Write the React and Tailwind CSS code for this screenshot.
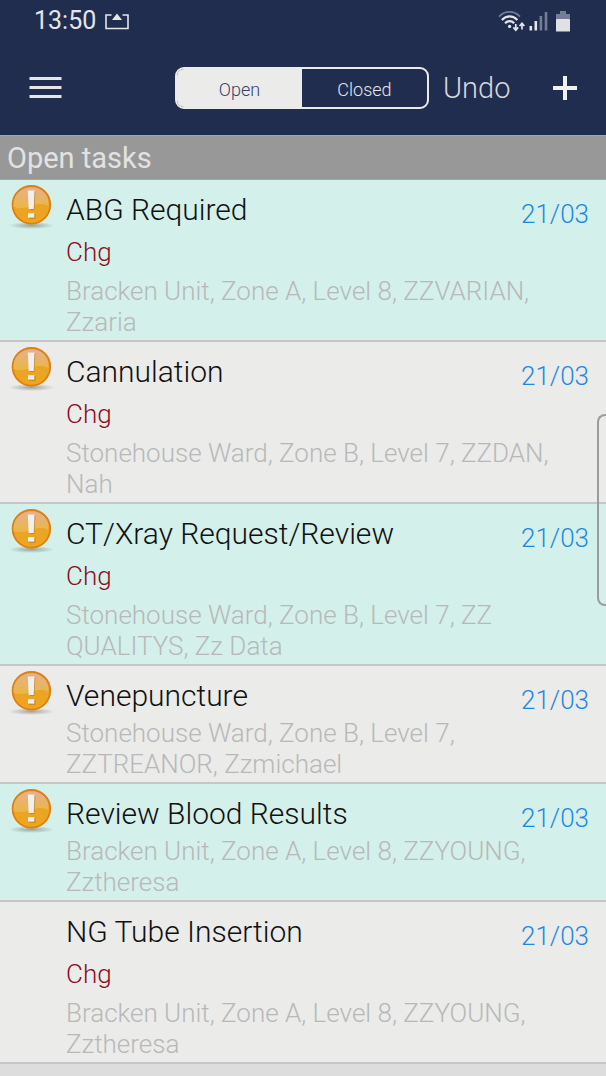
import { useState } from 'react';

const TASKS = [
  {
    id: 1,
    title: 'ABG Required',
    status: 'Chg',
    location: 'Bracken Unit, Zone A, Level 8, ZZVARIAN, Zzaria',
    date: '21/03',
    urgent: true,
  },
  {
    id: 2,
    title: 'Cannulation',
    status: 'Chg',
    location: 'Stonehouse Ward, Zone B, Level 7, ZZDAN, Nah',
    date: '21/03',
    urgent: true,
  },
  {
    id: 3,
    title: 'CT/Xray Request/Review',
    status: 'Chg',
    location: 'Stonehouse Ward, Zone B, Level 7, ZZ QUALITYS, Zz Data',
    date: '21/03',
    urgent: true,
  },
  {
    id: 4,
    title: 'Venepuncture',
    location: 'Stonehouse Ward, Zone B, Level 7, ZZTREANOR, Zzmichael',
    date: '21/03',
    urgent: true,
  },
  {
    id: 5,
    title: 'Review Blood Results',
    location: 'Bracken Unit, Zone A, Level 8, ZZYOUNG, Zztheresa',
    date: '21/03',
    urgent: true,
  },
  {
    id: 6,
    title: 'NG Tube Insertion',
    status: 'Chg',
    location: 'Bracken Unit, Zone A, Level 8, ZZYOUNG, Zztheresa',
    date: '21/03',
    urgent: false,
  },
];

const ShareIcon = () => (
  <svg width="24" height="17" viewBox="0 0 24 17" aria-hidden="true">
    <path d="M6.5 2H1v13.5h22V2h-5.5" fill="none" stroke="#e4e6ea" strokeWidth="1.6" />
    <path d="M12 0.5L17 7H7z" fill="#e4e6ea" />
  </svg>
);

const WifiIcon = () => (
  <svg width="27" height="21" viewBox="0 0 27 21" fill="none" aria-hidden="true">
    <path d="M1 5.6C7 -0.6 16 -0.6 22 5.6" stroke="#737d95" strokeWidth="1.8" />
    <path d="M3.8 9C8.6 4.2 14.8 4.2 19.4 9" stroke="#e4e6ea" strokeWidth="2.1" />
    <path d="M7 12.2C9.8 9.4 13.6 9.4 16.2 12.2" stroke="#e4e6ea" strokeWidth="2.1" />
    <circle cx="11.6" cy="15.4" r="1.6" fill="#e4e6ea" />
    <path d="M17.8 13v6M15.4 16.4l2.4 2.8 2.4-2.8M24 18.5v-6M21.6 15l2.4-2.8 2.4 2.8" stroke="#e4e6ea" strokeWidth="1.7" />
  </svg>
);

const SignalIcon = () => (
  <svg width="19" height="20" viewBox="0 0 19 20" aria-hidden="true">
    <rect x="0.5" y="15" width="2.6" height="4.5" fill="#e4e6ea" />
    <rect x="5.5" y="10" width="2.6" height="9.5" fill="#e4e6ea" />
    <rect x="10.6" y="5" width="2.6" height="14.5" fill="#737d95" />
    <rect x="15.7" y="1" width="2.6" height="18.5" fill="#737d95" />
  </svg>
);

const BatteryIcon = () => (
  <svg width="14" height="21" viewBox="0 0 14 21" aria-hidden="true">
    <path d="M4 0h6v3h4v5H0V3h4z" fill="#737d95" />
    <rect y="8" width="14" height="12.5" rx="0.6" fill="#e0e1e3" />
  </svg>
);

const AlertBadge = () => (
  <svg width="46" height="46" viewBox="0 0 46 46" role="img" aria-label="Urgent">
    <defs>
      <linearGradient id="badge-fill" x1="0" y1="0" x2="0" y2="1">
        <stop offset="0" stopColor="#e8a35a" />
        <stop offset="0.5" stopColor="#e9a526" />
        <stop offset="1" stopColor="#f0a41c" />
      </linearGradient>
      <linearGradient id="badge-gloss" x1="0" y1="0" x2="0" y2="1">
        <stop offset="0" stopColor="#e6b4a0" />
        <stop offset="1" stopColor="#eabd50" />
      </linearGradient>
      <radialGradient id="badge-shadow">
        <stop offset="0" stopColor="#5a5a5a" stopOpacity="0.5" />
        <stop offset="1" stopColor="#5a5a5a" stopOpacity="0" />
      </radialGradient>
    </defs>
    <ellipse cx="22.5" cy="41.5" rx="23" ry="3.6" fill="url(#badge-shadow)" />
    <circle cx="22.4" cy="20.8" r="18.8" fill="url(#badge-fill)" stroke="#df7f12" strokeWidth="1.8" />
    <path
      d="M4.7 23C3.3 11.5 11.500 3.500 22.4 3.500s18.300 8 16.900 18.500c-3-2-8-2.500-12.300-1.500C20.500 22 13.500 26 4.700 23z"
      fill="url(#badge-gloss)"
      opacity="0.75"
    />
    <path d="M20 7.5h6.5l-1.200 18.500h-4z" fill="#a9762a" opacity="0.6" />
    <rect x="20" y="30" width="6.5" height="4.8" fill="#a9762a" opacity="0.6" />
    <path d="M18.8 6.5h6.700l-0.800 18.500h-5z" fill="#f2f0ec" />
    <rect x="19" y="29.2" width="6.3" height="4.4" fill="#f2f0ec" />
  </svg>
);

const StatusBar = () => (
  <div className="flex h-[42px] items-center justify-between pr-9 pl-[34px]">
    <div className="flex items-center gap-[9px]">
      <span className="text-[25px] leading-[42px] text-[#e4e6ea]">13:50</span>
      <ShareIcon />
    </div>
    <div className="flex items-center gap-1">
      <WifiIcon />
      <SignalIcon />
      <span className="pl-1">
        <BatteryIcon />
      </span>
    </div>
  </div>
);

const Toolbar = ({ filter, onFilter }) => {
  const tab = 'flex-1 pt-0.5 text-[18px] font-light';

  return (
    <div className="grid grid-cols-[1fr_254px_1fr] items-center pt-[25px] pr-0.5 pb-[26px]">
      <button type="button" aria-label="Menu" className="w-fit pl-[29px]">
        <svg width="33" height="24" viewBox="0 0 33 24" fill="#e4e6e8" aria-hidden="true">
          <rect x="0.5" y="1" width="32" height="3" />
          <rect x="0.5" y="10" width="32" height="3" />
          <rect x="0.5" y="19" width="32" height="3" />
        </svg>
      </button>

      <div role="group" aria-label="Filter tasks" className="flex h-[42px] overflow-hidden rounded-[9px] border-2 border-[#ebebea]">
        <button
          type="button"
          aria-pressed={filter === 'open'}
          onClick={() => onFilter('open')}
          className={`${tab} ${filter === 'open' ? 'bg-[#ebebea] text-[#36426a]' : 'text-[#e4e6ea]'}`}
        >
          Open
        </button>
        <button
          type="button"
          aria-pressed={filter === 'closed'}
          onClick={() => onFilter('closed')}
          className={`${tab} ${filter === 'closed' ? 'bg-[#ebebea] text-[#36426a]' : 'text-[#e4e6ea]'}`}
        >
          Closed
        </button>
      </div>

      <div className="flex items-center justify-between pr-[26px] pl-[14px]">
        <button type="button" className="text-[29px] leading-10 font-light text-[#d5d8df]">
          Undo
        </button>
        <button type="button" aria-label="Add task">
          <svg width="26" height="26" viewBox="0 0 26 26" fill="#f0f0ee" aria-hidden="true">
            <rect x="11" y="1" width="4" height="24" />
            <rect x="1" y="11" width="24" height="4" />
          </svg>
        </button>
      </div>
    </div>
  );
};

const TaskRow = ({ task }) => (
  <li className="flex border-b-2 border-[#c6c6c6] pb-0.5 odd:bg-[#d4f0ea] even:bg-[#ebebea]">
    <div className="w-[66px] shrink-0 pt-1 pl-[9px]">{task.urgent && <AlertBadge />}</div>
    <div className="min-w-0 flex-1 pr-[17px] font-light">
      <div className="flex items-end justify-between pt-[9px]">
        <h2 className="pb-[1px] text-[30px] leading-[42px] text-[#111]">{task.title}</h2>
        <time className="text-[26px] leading-[35px] text-[#1e88e5]">{task.date}</time>
      </div>
      {task.status && (
        <p className="mb-1 text-[26px] leading-10 text-[#8b0f1e]">{task.status}</p>
      )}
      <p className="text-[26px] leading-[31px] text-[#b7b9b8]">{task.location}</p>
    </div>
  </li>
);

const App = () => {
  const [filter, setFilter] = useState('open');
  const tasks = filter === 'open' ? TASKS : [];

  return (
    <div className="relative min-h-screen bg-[#dddddd] font-[Roboto,sans-serif]">
      <header className="bg-[#212d4f]">
        <StatusBar />
        <Toolbar filter={filter} onFilter={setFilter} />
      </header>

      <main>
        <h1 className="border-y border-[#a6a6a6] bg-[#989898] pt-[1px] pl-[7px] text-[29px] leading-[42px] text-[#e2e2e2]">
          {filter === 'open' ? 'Open tasks' : 'Closed tasks'}
        </h1>
        <ul>
          {tasks.map((task) => (
            <TaskRow key={task.id} task={task} />
          ))}
        </ul>
      </main>

      {/* Edge panel handle */}
      <div className="absolute top-[414px] right-0 h-48 w-[9px] rounded-l-lg border-2 border-r-0 border-[#9c9c9c]" />
    </div>
  );
};

export default App;
